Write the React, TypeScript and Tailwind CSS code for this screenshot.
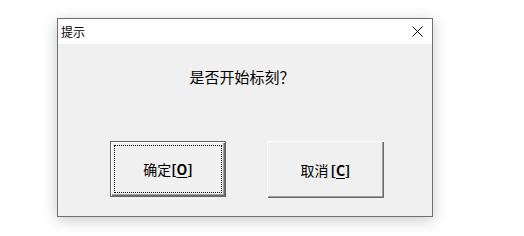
import React from "react";

const font = { fontFamily: '"Noto Sans CJK SC", "Microsoft YaHei", sans-serif' };

function CloseIcon() {
  return (
    <svg width="11" height="11" viewBox="0 0 11 11" className="block">
      <path d="M0.5 0.5 L10.5 10.5 M10.5 0.5 L0.5 10.5" stroke="#000" strokeWidth="1" fill="none" />
    </svg>
  );
}

export default function App() {
  return (
    <div className="w-[524px] h-[236px] bg-white pl-[57px] pt-[18px]" style={font}>
      {/* dialog window */}
      <div className="w-[376px] h-[199px] border border-[#707070] bg-[#f0f0f0] flex flex-col shadow-[0_3px_14px_rgba(0,0,0,0.22)]">
        {/* title bar */}
        <div className="h-[25px] bg-white flex items-center justify-between pl-[3px] pr-[9px]">
          <span className="text-[12px] leading-none text-black">提示</span>
          <CloseIcon />
        </div>

        {/* message */}
        <div className="mt-[22px] h-[20px] flex items-center justify-center text-[15px] leading-none text-black pr-[6px]">
          是否开始标刻？
        </div>

        {/* buttons */}
        <div className="mt-[55px] flex pl-[52px] gap-[41px]">
          <button className="w-[116px] h-[56px] border border-[#646464] bg-[#f0f0f0] p-0 shadow-[inset_1px_1px_0_#ffffff,inset_-1px_-1px_0_#696969,inset_-2px_-2px_0_#a0a0a0]">
            <span className="m-[3px] h-[48px] border border-dotted border-black flex items-center justify-center text-[14px] leading-none text-black">
              确定<span className="font-bold">[<span className="underline underline-offset-2">O</span>]</span>
            </span>
          </button>
          <button className="w-[117px] h-[57px] bg-[#f0f0f0] p-0 flex items-center justify-center text-[14px] leading-none text-black shadow-[inset_1px_1px_0_#ffffff,inset_-1px_-1px_0_#696969,inset_-2px_-2px_0_#a0a0a0]">
            取消<span className="font-bold ml-[2px]">[<span className="underline underline-offset-2">C</span>]</span>
          </button>
        </div>
      </div>
    </div>
  );
}
